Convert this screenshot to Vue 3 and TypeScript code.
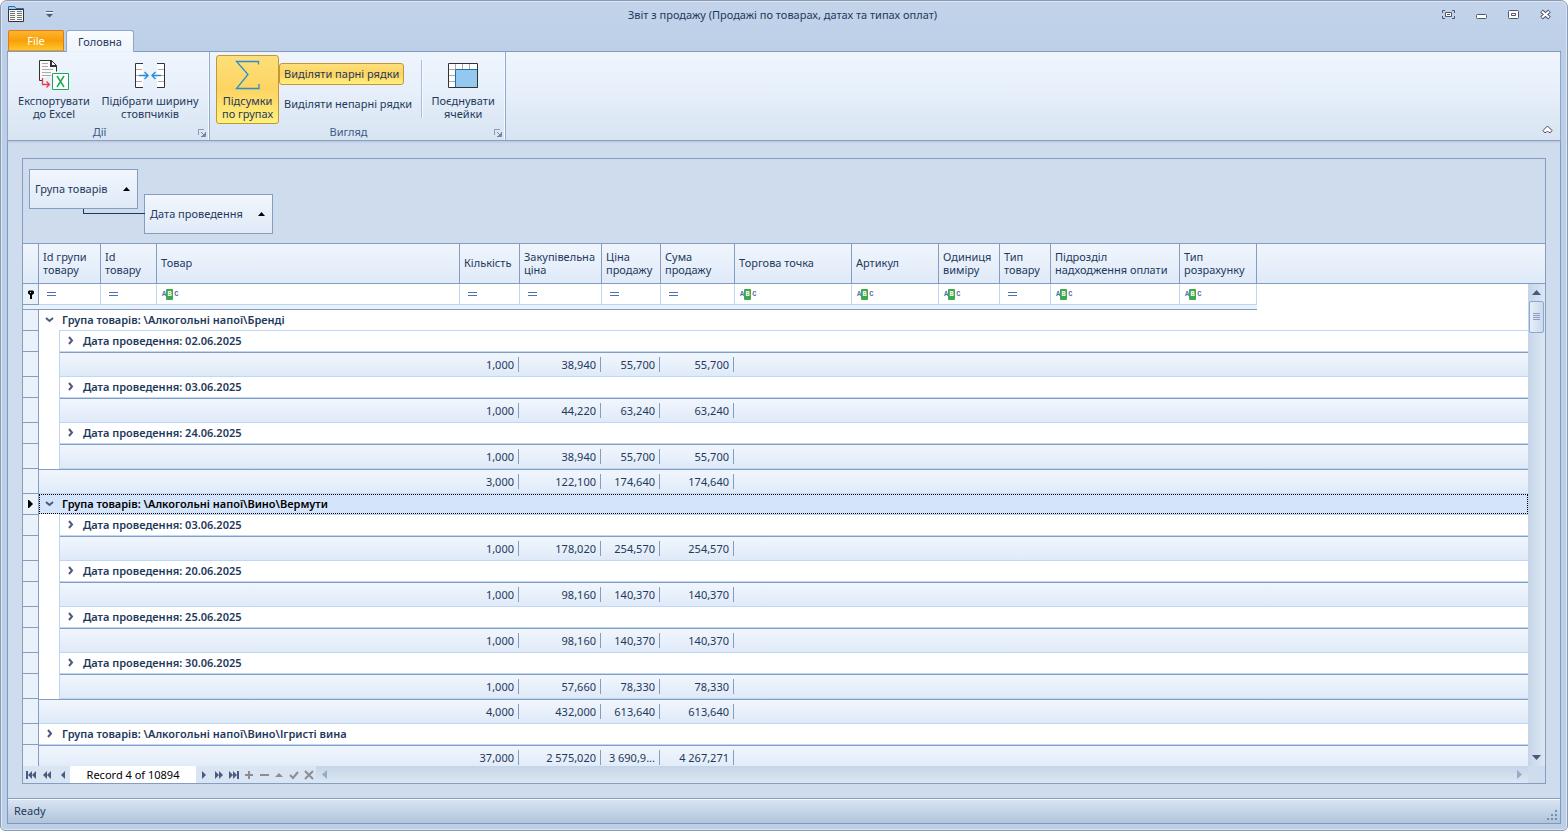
<script setup lang="ts">
import { ref } from 'vue'

interface Column { title: string; width: number; filter: 'eq' | 'abc' }
interface DateGroup { date: string; sums: string[] }
interface Group { name: string; expanded: boolean; focused: boolean; dates: DateGroup[]; sums: string[] }
interface NavIcon { label: string; path: string; stroke?: boolean; muted?: boolean }

const columns: Column[] = [
  { title: 'Id групи товару', width: 62, filter: 'eq' },
  { title: 'Id товару', width: 56, filter: 'eq' },
  { title: 'Товар', width: 303, filter: 'abc' },
  { title: 'Кількість', width: 60, filter: 'eq' },
  { title: 'Закупівельна ціна', width: 82, filter: 'eq' },
  { title: 'Ціна продажу', width: 59, filter: 'eq' },
  { title: 'Сума продажу', width: 74, filter: 'eq' },
  { title: 'Торгова точка', width: 117, filter: 'abc' },
  { title: 'Артикул', width: 87, filter: 'abc' },
  { title: 'Одиниця виміру', width: 61, filter: 'abc' },
  { title: 'Тип товару', width: 51, filter: 'eq' },
  { title: 'Підрозділ надходження оплати', width: 129, filter: 'abc' },
  { title: 'Тип розрахунку', width: 77, filter: 'abc' },
]

const groups = ref<Group[]>([
  {
    name: '\\Алкогольні напої\\Бренді', expanded: true, focused: false,
    dates: [
      { date: '02.06.2025', sums: ['1,000', '38,940', '55,700', '55,700'] },
      { date: '03.06.2025', sums: ['1,000', '44,220', '63,240', '63,240'] },
      { date: '24.06.2025', sums: ['1,000', '38,940', '55,700', '55,700'] },
    ],
    sums: ['3,000', '122,100', '174,640', '174,640'],
  },
  {
    name: '\\Алкогольні напої\\Вино\\Вермути', expanded: true, focused: true,
    dates: [
      { date: '03.06.2025', sums: ['1,000', '178,020', '254,570', '254,570'] },
      { date: '20.06.2025', sums: ['1,000', '98,160', '140,370', '140,370'] },
      { date: '25.06.2025', sums: ['1,000', '98,160', '140,370', '140,370'] },
      { date: '30.06.2025', sums: ['1,000', '57,660', '78,330', '78,330'] },
    ],
    sums: ['4,000', '432,000', '613,640', '613,640'],
  },
  {
    name: '\\Алкогольні напої\\Вино\\Ігристі вина', expanded: false, focused: false,
    dates: [],
    sums: ['37,000', '2 575,020', '3 690,9...', '4 267,271'],
  },
])

const navBefore: NavIcon[] = [
  { label: 'First', path: 'M1 2h2v8H1zM7 2v8L3 6zM11 2v8L7 6z' },
  { label: 'Previous page', path: 'M6 2v8L2 6zM10 2v8L6 6z' },
  { label: 'Previous', path: 'M8 2v8L4 6z' },
]
const navAfter: NavIcon[] = [
  { label: 'Next', path: 'M4 2v8l4-4z' },
  { label: 'Next page', path: 'M2 2v8l4-4zM6 2v8l4-4z' },
  { label: 'Last', path: 'M1 2v8l4-4zM5 2v8l4-4zM9 2h2v8H9z' },
  { label: 'Append', path: 'M5 2h2v3h3v2H7v3H5V7H2V5h3z', muted: true },
  { label: 'Delete', path: 'M2 5h9v2H2z', muted: true },
  { label: 'Edit', path: 'M2 8l4-4 4 4z', muted: true },
  { label: 'Post', path: 'M2 6l3 3 5-6', stroke: true, muted: true },
  { label: 'Cancel', path: 'M2 2l8 8M10 2l-8 8', stroke: true, muted: true },
]

const totals = ref(true)
const evenRows = ref(true)
const oddRows = ref(false)
</script>

<template>
  <div class="window">
    <header class="titlebar">
      <svg class="app-icon" width="17" height="17" viewBox="0 0 17 17">
        <path d="M.5 4V.5h6l1.500 2h7.500V4" fill="#9cccf0" stroke="#1c6fb5" />
        <path d="M.5 3.500h15v12H.5z" fill="#f8f8f8" stroke="#333" />
        <path d="M2 5.500h5M2 7.500h5M2 9.500h5M2 11.500h5M2 13.500h5M9 5.500h5M9 7.500h5M9 9.500h5M9 11.500h5M9 13.500h5" stroke="#777" />
      </svg>
      <button class="quick" aria-label="Customize">
        <svg width="9" height="9" viewBox="0 0 9 9"><path d="M1 1.500h7" stroke="#545c70" /><path d="M1 4h7L4.500 7.500z" fill="#545c70" /><path d="M1 2.500h7" stroke="#fff" /></svg>
      </button>
      <h1>Звіт з продажу (Продажі по товарах, датах та типах оплат)</h1>
      <div class="sysbuttons">
        <button aria-label="Full screen"><svg width="15" height="11" viewBox="0 0 15 11"><path d="M1.500 4V1.500H4M11 1.500h2.500V4M13.500 7v2.500H11M4 9.500H1.500V7" fill="none" stroke="#50566e" /><path d="M4.500 3.500h6v4h-6z" fill="#fff" stroke="#50566e" /><path d="M6 5.500h3" stroke="#50566e" /></svg></button>
        <button aria-label="Minimize"><svg width="13" height="11" viewBox="0 0 13 11"><rect x="1.500" y="5.500" width="10" height="4" rx="1" fill="#fff" stroke="#50566e" /></svg></button>
        <button aria-label="Restore"><svg width="13" height="11" viewBox="0 0 13 11"><rect x="1.500" y="1.500" width="10" height="8" rx="1" fill="#fff" stroke="#50566e" /><path d="M4.500 4.500h4v2h-4z" fill="none" stroke="#50566e" /></svg></button>
        <button aria-label="Close"><svg width="13" height="11" viewBox="0 0 13 11"><path d="M2.500 2l8 7M10.500 2l-8 7" stroke="#50566e" stroke-width="4" /><path d="M3 2.500l7 6M10 2.500l-7 6" stroke="#fff" stroke-width="2" /></svg></button>
      </div>
    </header>

    <nav class="tabs">
      <button class="file">File</button>
      <button class="tab">Головна</button>
    </nav>

    <div class="client">
      <section class="ribbon">
        <div class="rgroup actions">
          <div class="items">
            <button class="big export">
              <svg width="32" height="32" viewBox="0 0 32 32">
                <path d="M1.500 21.500V1.500h12l5 5v6" fill="#fafafa" stroke="#333" />
                <path d="M1.500 21.500h3" stroke="#333" />
                <path d="M13 1.500v5.500h5.500" fill="none" stroke="#333" stroke-width="2" />
                <path d="M4 4.500h6M4 7.500h6M4 10.500h11M4 13.500h9M4 16.500h9" stroke="#aaa" />
                <path d="M4.500 19v6.500h7M8.500 22.500l3 3-3 3" fill="none" stroke="#ef3e4a" stroke-width="1.300" />
                <path d="M14.500 14.500h16v16h-16z" fill="#fff" stroke="#1aab52" />
                <path d="M19 17l7 11M26 17l-7 11" stroke="#1aab52" stroke-width="1.500" fill="none" />
              </svg>
              <span>Експортувати<br>до Excel</span>
            </button>
            <button class="big fit">
              <svg width="32" height="32" viewBox="0 0 32 32">
                <path d="M9 4.500H1.500v24H9M23 4.500h7.500v24H23" fill="#fff" stroke="#333" />
                <path d="M2 10.500h6M2 16.500h3M2 22.500h6M24 10.500h6M27 16.500h3M24 22.500h6" stroke="#aaa" />
                <path d="M5 16.500h9M10.500 13l3.500 3.500-3.500 3.500M27 16.500h-9M21.500 13L18 16.500l3.500 3.500" fill="none" stroke="#2a8dd4" stroke-width="1.400" />
              </svg>
              <span>Підібрати ширину<br>стовпчиків</span>
            </button>
          </div>
          <div class="caption">Дії</div>
          <button class="launcher" aria-label="Дії"><svg width="8" height="8" viewBox="0 0 8 8"><path d="M.5 6V.5H6" fill="none" stroke="#8b99ad" /><path d="M3 3l4 4M7.500 3v4.500H3" fill="none" stroke="#7686a0" /><path d="M4 7l3-3v3z" fill="#7686a0" /></svg></button>
        </div>
        <div class="rgroup view">
          <div class="items">
            <button class="big sum" :class="{ on: totals }" :aria-pressed="totals" @click="totals = !totals">
              <svg width="32" height="32" viewBox="0 0 32 32"><path d="M26.500 5.500V2.500H4.500L16 15.500 4.500 29.500H27V25" fill="none" stroke="#2a8dd4" stroke-width="1.300" /></svg>
              <span>Підсумки<br>по групах</span>
            </button>
            <div class="stack">
              <button class="small" :class="{ on: evenRows }" :aria-pressed="evenRows" @click="evenRows = !evenRows">Виділяти парні рядки</button>
              <button class="small" :class="{ on: oddRows }" :aria-pressed="oddRows" @click="oddRows = !oddRows">Виділяти непарні рядки</button>
            </div>
            <i class="divider"></i>
            <button class="big merge">
              <svg width="32" height="32" viewBox="0 0 32 32">
                <path d="M1.500 4.500h29v24h-29z" fill="#fff" />
                <path d="M8.500 5v5M15.500 5v5M22.500 5v5M2 10.500h6M2 16.500h6M2 22.500h6" stroke="#aaa" />
                <path d="M8.500 10.500h22v18h-22z" fill="#93c8ef" stroke="#1c6fb5" />
                <path d="M1.500 4.500h29v24h-29z" fill="none" stroke="#333" />
              </svg>
              <span>Поєднувати<br>ячейки</span>
            </button>
          </div>
          <div class="caption">Вигляд</div>
          <button class="launcher" aria-label="Вигляд"><svg width="8" height="8" viewBox="0 0 8 8"><path d="M.5 6V.5H6" fill="none" stroke="#8b99ad" /><path d="M3 3l4 4M7.500 3v4.500H3" fill="none" stroke="#7686a0" /><path d="M4 7l3-3v3z" fill="#7686a0" /></svg></button>
        </div>
        <button class="collapse" aria-label="Collapse"><svg width="11" height="9" viewBox="0 0 11 9"><path d="M1 5.500L5.500 1 10 5.500 8.500 7.500H7L5.500 6 4 7.500H2.500z" fill="#fff" stroke="#41475c" /></svg></button>
      </section>

      <main class="content">
        <div class="grid">
          <div class="groupbar">
            <button class="chip first">Група товарів<svg width="7" height="4" viewBox="0 0 7 4"><path d="M0 4h7L3.500 0z" /></svg></button>
            <button class="chip second">Дата проведення<svg width="7" height="4" viewBox="0 0 7 4"><path d="M0 4h7L3.500 0z" /></svg></button>
          </div>

          <table class="head">
            <colgroup>
              <col class="c-ind">
              <col v-for="c in columns" :key="c.title" :style="{ width: c.width + 'px' }">
              <col>
            </colgroup>
            <thead>
              <tr>
                <th></th>
                <th v-for="c in columns" :key="c.title" scope="col">{{ c.title }}</th>
                <th class="rest"></th>
              </tr>
            </thead>
          </table>

          <div class="viewport">
            <div class="rows">
              <table class="body">
                <colgroup>
                  <col class="c-ind"><col class="c-indent"><col class="c-id">
                  <col v-for="c in columns.slice(1)" :key="c.title" :style="{ width: c.width + 'px' }">
                  <col>
                </colgroup>
                <tbody>
                  <tr class="filter">
                    <td class="ind"><svg width="6" height="9" viewBox="0 0 6 9"><path d="M0 1.500L1 .5h4l1 1v2L4 5v4H2V5L0 3.500z" /><path d="M2 2h1v1H2z" fill="#fff" /></svg></td>
                    <td v-for="(c, i) in columns" :key="c.title" :colspan="i === 0 ? 2 : 1">
                      <div class="fcell">
                        <button :class="c.filter" :aria-label="c.title">
                          <svg v-if="c.filter === 'eq'" width="9" height="4" viewBox="0 0 9 4"><path d="M0 .5h9M0 3.500h9" stroke="#4f70aa" /></svg>
                          <template v-else><span>A</span><b>B</b><span>C</span></template>
                        </button>
                        <input type="text" :aria-label="c.title">
                      </div>
                    </td>
                    <td class="blank"></td>
                  </tr>
                  <tr class="band"><td :colspan="15"></td><td class="blank"></td></tr>
                  <template v-for="g in groups" :key="g.name">
                    <tr class="group" :class="{ focused: g.focused }">
                      <td class="ind"><svg v-if="g.focused" width="5" height="8" viewBox="0 0 5 8"><path d="M0 0h1l4 4-4 4H0z" /></svg></td>
                      <td :colspan="15" class="gcell">
                        <div class="gline" :class="{ closed: !g.expanded }">
                          <button class="exp" :aria-expanded="g.expanded" :aria-label="g.name" @click="g.expanded = !g.expanded">
                            <svg v-if="g.expanded" width="9" height="9" viewBox="0 0 9 9"><path d="M1 3l3.500 3L8 3" /></svg>
                            <svg v-else width="9" height="9" viewBox="0 0 9 9"><path d="M3 1l3 3.500L3 8" /></svg>
                          </button>Група товарів: {{ g.name }}
                        </div>
                      </td>
                    </tr>
                    <template v-if="g.expanded">
                      <template v-for="d in g.dates" :key="d.date">
                        <tr class="date">
                          <td class="ind"></td><td class="indent"></td>
                          <td :colspan="14" class="dcell">
                            <button class="exp" :aria-label="d.date"><svg width="9" height="9" viewBox="0 0 9 9"><path d="M3 1l3 3.500L3 8" /></svg></button>Дата проведення: {{ d.date }}
                          </td>
                        </tr>
                        <tr class="sums">
                          <td class="ind"></td><td class="indent"></td><td :colspan="3"></td>
                          <td v-for="(s, i) in d.sums" :key="i" class="num"><span>{{ s }}</span></td>
                          <td :colspan="7"></td>
                        </tr>
                      </template>
                    </template>
                    <tr class="sums">
                      <td class="ind"></td><td :colspan="4"></td>
                      <td v-for="(s, i) in g.sums" :key="i" class="num"><span>{{ s }}</span></td>
                      <td :colspan="7"></td>
                    </tr>
                  </template>
                </tbody>
              </table>
            </div>
            <div class="vscroll">
              <button aria-label="Up"><svg width="9" height="5" viewBox="0 0 9 5"><path d="M0 5h9L4.500 0z" /></svg></button>
              <div class="thumb"></div>
              <button class="down" aria-label="Down"><svg width="9" height="5" viewBox="0 0 9 5"><path d="M0 0h9L4.500 5z" /></svg></button>
            </div>
          </div>

          <footer class="navigator">
            <button v-for="n in navBefore" :key="n.label" class="nb before" :aria-label="n.label"><svg width="12" height="12" viewBox="0 0 12 12"><path :d="n.path" /></svg></button>
            <div class="record">Record 4 of 10894</div>
            <button v-for="n in navAfter" :key="n.label" class="nb" :class="{ muted: n.muted }" :aria-label="n.label"><svg width="12" height="12" viewBox="0 0 12 12"><path :d="n.path" :class="{ line: n.stroke }" /></svg></button>
            <div class="hscroll">
              <button aria-label="Left"><svg width="5" height="9" viewBox="0 0 5 9"><path d="M5 0v9L0 4.500z" /></svg></button>
              <button aria-label="Right"><svg width="5" height="9" viewBox="0 0 5 9"><path d="M0 0v9l5-4.500z" /></svg></button>
            </div>
            <i class="corner"></i>
          </footer>
        </div>
      </main>

      <div class="status">
        <span>Ready</span>
        <svg width="11" height="11" viewBox="0 0 11 11"><path d="M8 0h2v2H8zM4 4h2v2H4zM8 4h2v2H8zM0 8h2v2H0zM4 8h2v2H4zM8 8h2v2H8z" fill="#6f8fbd" /></svg>
      </div>
    </div>
  </div>
</template>

<style>
body { background: #fff; }
</style>

<style scoped>
* { box-sizing: border-box; }
.window {
  height: 100vh;
  display: flex;
  flex-direction: column;
  padding: 0 6px 6px;
  border: 1px solid #8a9ab2;
  border-radius: 7px 7px 5px 5px;
  background: linear-gradient(#c3d4ea, #bccfe7 50px, #bccfe7);
  box-shadow: inset 0 0 0 1px #dbe7f6;
  font: 11px/13px "Noto Sans", "Open Sans", sans-serif;
  color: #1e395b;
  overflow: hidden;
}
button {
  font: inherit;
  color: inherit;
  background: none;
  border: 0;
  padding: 0;
  margin: 0;
  display: flex;
  align-items: center;
  justify-content: center;
}
svg { display: block; flex: none; }

.titlebar { display: flex; align-items: center; height: 29px; flex: none; padding: 0 9px 2px 1px; }
.quick { margin-left: 20px; }
.titlebar h1 { flex: 1; margin: 0; font-size: 11px; font-weight: 400; text-align: center; padding-left: 70px; }
.sysbuttons { display: flex; gap: 19px; }

.tabs { display: flex; align-items: flex-end; height: 21px; flex: none; padding-left: 1px; gap: 2px; }
.file {
  width: 56px;
  height: 21px;
  border: 1px solid #dc7a1e;
  border-bottom-color: #e3992b;
  border-radius: 2px 2px 0 0;
  background: linear-gradient(#fdb52f, #f99f08 50%, #ffc62c);
  color: #fff;
}
.tab {
  width: 68px;
  height: 22px;
  margin-bottom: -1px;
  border: 1px solid #8fa8c9;
  border-bottom: 0;
  border-radius: 3px 3px 0 0;
  background: linear-gradient(#f8fbff, #eff5fd);
  position: relative;
}

.client { flex: 1; min-height: 0; display: flex; flex-direction: column; border: 1px solid #7c99bf; background: #cfdced; }
.ribbon {
  display: flex;
  flex: none;
  height: 89px;
  border-bottom: 1px solid #8ba0c0;
  background: linear-gradient(#eff5fd, #e6effa 45%, #d8e4f2);
  box-shadow: 0 1px 2px #b4c4da;
  position: relative;
}
.rgroup { display: flex; flex-direction: column; position: relative; border-right: 1px solid #93abca; box-shadow: inset -1px 0 #f5f9ff; }
.actions { width: 202px; }
.view { width: 296px; }
.items { display: flex; height: 72px; padding: 3px 0 0 6px; }
.caption { text-align: center; color: #3b5a87; padding: 1px 18px 0 0; }
.launcher { position: absolute; right: 3px; bottom: 3px; }
.big { flex: none; flex-direction: column; justify-content: flex-start; height: 69px; padding-top: 3px; border: 1px solid transparent; border-radius: 3px; line-height: 13px; white-space: nowrap; }
.big span { margin-top: 3px; }
.export { width: 80px; }
.fit { width: 112px; }
.sum { width: 63px; }
.merge { width: 82px; }
.on { border: 1px solid #c2973c; background: linear-gradient(#fddf7a, #fdd462 50%, #fff07c); }
.stack { display: flex; flex: none; flex-direction: column; gap: 8px; padding-top: 8px; align-items: flex-start; }
.small { height: 22px; padding: 0 4px 2px; border: 1px solid transparent; border-radius: 3px; white-space: nowrap; }
.small.on { border-color: #c2973c; }
.divider { flex: none; width: 1px; height: 58px; margin: 5px 0 0 4px; background: #a9bfdb; box-shadow: 1px 0 #f5f9ff; }
.collapse { position: absolute; right: 7px; bottom: 6px; }

.content { flex: 1; min-height: 0; padding: 17px 14px 14px; display: flex; }
.grid { flex: 1; min-width: 0; display: flex; flex-direction: column; border: 1px solid #849dc0; }
.groupbar { display: flex; gap: 6px; height: 84px; flex: none; padding: 10px 6px 0; }
.chip { display: flex; justify-content: space-between; height: 40px; padding: 0 7px 2px 5px; border: 1px solid #849dc0; background: linear-gradient(#f2f6fd, #dfeaf7); position: relative; white-space: nowrap; }
.chip svg { fill: #000; margin-top: 2px; }
.first { width: 109px; }
.second { width: 129px; margin-top: 25px; }
.second::before { content: ""; position: absolute; right: 100%; top: 14px; width: 61px; height: 4px; border: solid #1e395b; border-width: 0 0 1px 1px; }

table { border-collapse: separate; border-spacing: 0; table-layout: fixed; width: 100%; }
.c-ind { width: 16px; }
.c-indent { width: 21px; }
.c-id { width: 41px; }
td, th { padding: 0; font-weight: 400; text-align: left; white-space: nowrap; }
.head { flex: none; }
.head th { height: 41px; padding: 0 4px 2px; border: solid #849dc0; border-width: 1px 1px 1px 0; background: linear-gradient(#f0f5fd, #dfeaf8); white-space: normal; line-height: 13px; }
.head .rest { border-right: 0; }

.viewport { flex: 1; min-height: 0; display: flex; background: #fff; }
.rows { flex: 1; min-width: 0; overflow: hidden; }
.ind { background: #e9f1fb; border-right: 1px solid #849dc0; border-bottom: 1px solid #849dc0; }
.ind svg { margin: 0 auto; }
.filter td { height: 21px; border-right: 1px solid #bfd6f6; border-bottom: 1px solid #bfd6f6; }
.filter td.ind { border-color: #849dc0; }
.filter td.blank { border: 0; }
.fcell { display: flex; align-items: center; height: 20px; padding-left: 5px; }
.eq { margin-left: 3px; }
.abc { height: 11px; font: bold 7px/11px "Liberation Mono", monospace; color: #4f70aa; }
.abc b { width: 7px; margin-right: 1px; background: #3fa84d; color: #fff; border-radius: 1px; text-align: center; }
.fcell input { flex: 1; min-width: 0; height: 18px; border: 0; padding: 0 2px; background: none; font: inherit; color: inherit; outline: 0; }
.band td { height: 5px; background: #e9f1fb; border-bottom: 1px solid #849dc0; line-height: 0; }
.band td.blank { background: #fff; border: 0; }

.group td, .date td { height: 21px; font-weight: 600; }
.gcell, .dcell { vertical-align: top; }
.gline { display: flex; align-items: center; height: 20px; margin-bottom: 1px; padding: 0 0 2px 6px; position: relative; }
.gline::after { content: ""; position: absolute; left: 20px; right: 0; top: 20px; height: 1px; background: #bfd6f6; }
.gline.closed::after { left: 0; }
.focused .gline { background: #d4e5fb; color: #000; outline: 1px dotted #000; outline-offset: -1px; }
.exp { display: inline-flex; width: 9px; height: 9px; margin-right: 8px; }
.exp path { fill: none; stroke: #4d5a80; stroke-width: 2; }
.indent { border-right: 1px solid #bfd6f6; background: #fff; }
.date .dcell { padding-left: 6px; border-bottom: 1px solid #bfd6f6; line-height: 20px; }
.sums td { height: 25px; }
.sums td:not(.ind):not(.indent) { border-top: 1px solid #849dc0; border-bottom: 1px solid #bfd6f6; background: linear-gradient(#f1f6fd, #dfeaf8); }
.num span { display: block; height: 15px; line-height: 15px; text-align: right; padding-right: 4px; margin-right: 1px; border-right: 1px solid #849dc0; }

.vscroll { width: 17px; flex: none; display: flex; flex-direction: column; background: linear-gradient(90deg, #c5d5e8, #dce7f3); }
.vscroll button { height: 17px; }
.vscroll path { fill: #4a5580; }
.thumb { height: 32px; margin: 0 1px; border: 1px solid #8ba8d0; border-radius: 2px; background: linear-gradient(#89a0c4, #89a0c4) center 11px / 7px 1px no-repeat, linear-gradient(#89a0c4, #89a0c4) center 13px / 7px 1px no-repeat, linear-gradient(#89a0c4, #89a0c4) center 15px / 7px 1px no-repeat, linear-gradient(#89a0c4, #89a0c4) center 17px / 7px 1px no-repeat, linear-gradient(90deg, #e6eef8, #cbd9eb); }
.down { margin-top: auto; }

.navigator { display: flex; height: 17px; flex: none; background: #d9e5f3; }
.nb { width: 15px; }
.before + .before { margin-left: 1px; }
.nb path { fill: #4d5a80; }
.nb.muted path { fill: #8d8d8d; }
.nb.muted .line { fill: none; stroke: #8d8d8d; stroke-width: 2; }
.record { width: 126px; background: #fff; color: #000; text-align: center; line-height: 17px; }
.hscroll { flex: 1; display: flex; justify-content: space-between; padding: 0 6px; background: linear-gradient(#c5d5e8, #dce7f3); }
.hscroll path { fill: #9aa9c6; }
.corner { width: 17px; background: #cfdced; }

.status { flex: none; display: flex; align-items: center; justify-content: space-between; height: 25px; padding: 0 2px 2px 6px; border-top: 1px solid #849dc0; box-shadow: inset 0 1px #f5f9ff; background: linear-gradient(#d9e5f4, #b2c4da); }
.status svg { align-self: flex-end; }
</style>
